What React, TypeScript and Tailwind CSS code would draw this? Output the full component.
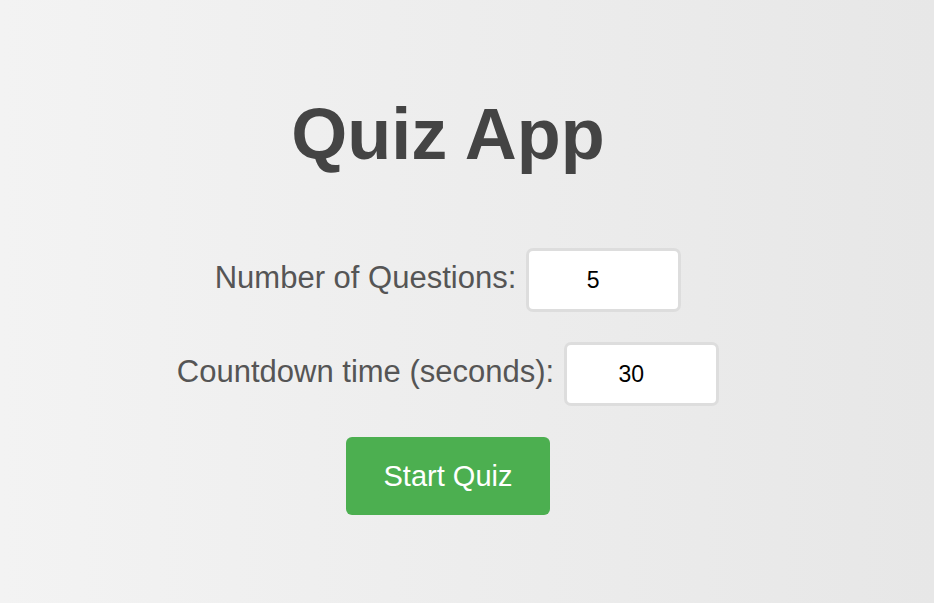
import React from "react";

export default function App() {
  return (
    <div
      className="w-full h-[603px] overflow-hidden bg-[linear-gradient(to_right,#f3f3f3,#e7e7e7)]"
      style={{ fontFamily: '"Liberation Sans", Arial, sans-serif' }}
    >
      <div className="w-[896px] flex flex-col items-center pt-[98px]">
        <h1 className="text-[72px] leading-none font-bold text-[#444444] m-0">Quiz App</h1>
        <div className="mt-[78px] flex items-center gap-[10px]">
          <label className="text-[31px] leading-none text-[#555555] mb-[6px]">Number of Questions:</label>
          <input
            type="text"
            defaultValue="5"
            className="w-[155px] h-[64px] bg-white border-[3px] border-[#dddddd] rounded-[7px] text-center pr-[21px] text-[23px] text-black outline-none"
          />
        </div>
        <div className="mt-[30px] flex items-center gap-[10px]">
          <label className="text-[31px] leading-none text-[#555555] mb-[6px]">Countdown time (seconds):</label>
          <input
            type="text"
            defaultValue="30"
            className="w-[155px] h-[64px] bg-white border-[3px] border-[#dddddd] rounded-[7px] text-center pr-[21px] text-[23px] text-black outline-none"
          />
        </div>
        <button className="mt-[31px] w-[204px] h-[78px] bg-[#4caf50] rounded-[6px] text-white text-[29px] leading-none">
          Start Quiz
        </button>
      </div>
    </div>
  );
}
